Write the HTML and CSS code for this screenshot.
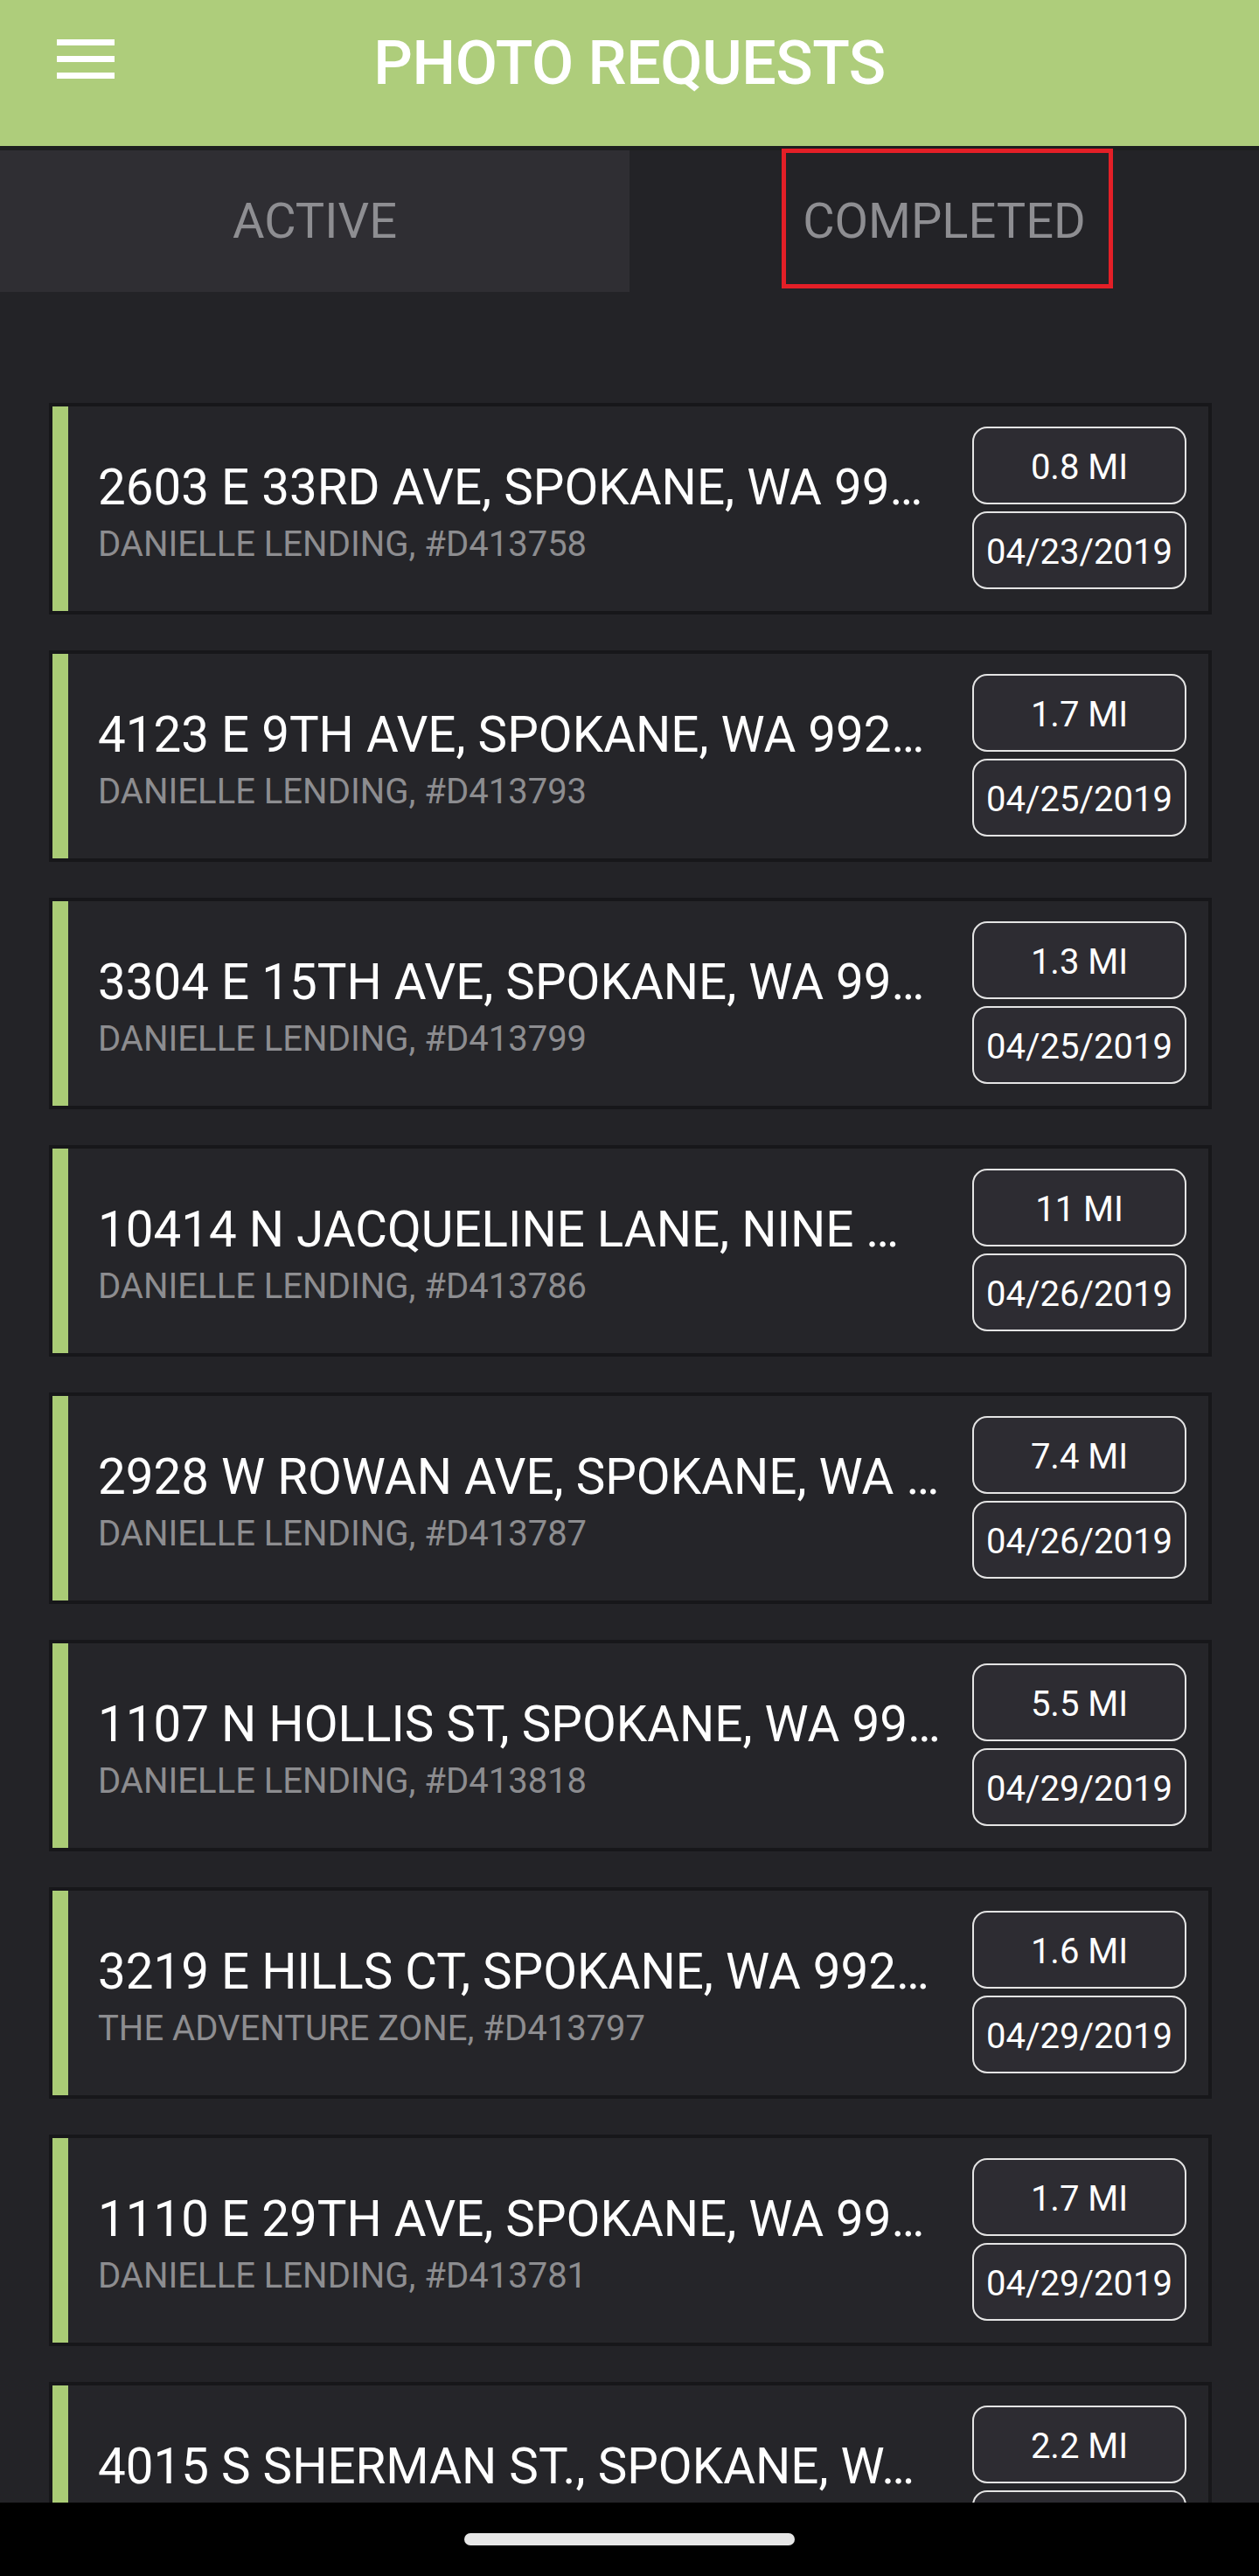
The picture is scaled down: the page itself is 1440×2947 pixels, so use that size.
FILE: index.html
```html
<!DOCTYPE html>
<html lang="en">
<head>
<meta charset="utf-8">
<title>Photo Requests</title>
<link rel="stylesheet" href="styles.css">
</head>
<body>
<header class="toolbar">
  <div class="toolbar-left">
    <span class="menu" aria-label="Menu"><i></i><i></i><i></i></span>
  </div>
  <h1 class="title">PHOTO REQUESTS</h1>
  <div class="toolbar-right"></div>
</header>
<nav class="tabs">
  <div class="tab tab-active">ACTIVE</div>
  <div class="tab">COMPLETED<span class="highlight"></span></div>
</nav>
<main class="list">
  <article class="card"><div class="accent"></div><div class="info"><div class="address">2603 E 33RD AVE, SPOKANE, WA 99…</div><div class="client">DANIELLE LENDING, #D413758</div></div><div class="badges"><div class="badge">0.8 MI</div><div class="badge">04/23/2019</div></div></article>
  <article class="card"><div class="accent"></div><div class="info"><div class="address">4123 E 9TH AVE, SPOKANE, WA 992…</div><div class="client">DANIELLE LENDING, #D413793</div></div><div class="badges"><div class="badge">1.7 MI</div><div class="badge">04/25/2019</div></div></article>
  <article class="card"><div class="accent"></div><div class="info"><div class="address">3304 E 15TH AVE, SPOKANE, WA 99…</div><div class="client">DANIELLE LENDING, #D413799</div></div><div class="badges"><div class="badge">1.3 MI</div><div class="badge">04/25/2019</div></div></article>
  <article class="card"><div class="accent"></div><div class="info"><div class="address">10414 N JACQUELINE LANE, NINE …</div><div class="client">DANIELLE LENDING, #D413786</div></div><div class="badges"><div class="badge">11 MI</div><div class="badge">04/26/2019</div></div></article>
  <article class="card"><div class="accent"></div><div class="info"><div class="address">2928 W ROWAN AVE, SPOKANE, WA …</div><div class="client">DANIELLE LENDING, #D413787</div></div><div class="badges"><div class="badge">7.4 MI</div><div class="badge">04/26/2019</div></div></article>
  <article class="card"><div class="accent"></div><div class="info"><div class="address">1107 N HOLLIS ST, SPOKANE, WA 99…</div><div class="client">DANIELLE LENDING, #D413818</div></div><div class="badges"><div class="badge">5.5 MI</div><div class="badge">04/29/2019</div></div></article>
  <article class="card"><div class="accent"></div><div class="info"><div class="address">3219 E HILLS CT, SPOKANE, WA 992…</div><div class="client">THE ADVENTURE ZONE, #D413797</div></div><div class="badges"><div class="badge">1.6 MI</div><div class="badge">04/29/2019</div></div></article>
  <article class="card"><div class="accent"></div><div class="info"><div class="address">1110 E 29TH AVE, SPOKANE, WA 99…</div><div class="client">DANIELLE LENDING, #D413781</div></div><div class="badges"><div class="badge">1.7 MI</div><div class="badge">04/29/2019</div></div></article>
  <article class="card"><div class="accent"></div><div class="info"><div class="address">4015 S SHERMAN ST., SPOKANE, W…</div><div class="client">DANIELLE LENDING, #D413800</div></div><div class="badges"><div class="badge">2.2 MI</div><div class="badge">04/30/2019</div></div></article>
</main>
<div class="navbar"><span class="handle"></span></div>
</body>
</html>
```
FILE: styles.css
```css
html, body {
  margin: 0;
  padding: 0;
}
body {
  background: #232327;
  font-family: Roboto, "Noto Sans", "Liberation Sans", sans-serif;
  height: 2947px;
  overflow: hidden;
}

.toolbar {
  height: 167px;
  background: #aecd7b;
  display: grid;
  grid-template-columns: 1fr auto 1fr;
  align-items: start;
  box-sizing: border-box;
  padding-top: 37px;
}
.toolbar-left {
  padding-left: 65px;
  padding-top: 8px;
}
.menu {
  display: flex;
  flex-direction: column;
  gap: 12px;
  width: 66px;
}
.menu i {
  display: block;
  height: 7px;
  background: #ffffff;
}
.title {
  margin: 0;
  font-size: 70px;
  line-height: 70px;
  font-weight: 500;
  color: #ffffff;
  letter-spacing: -0.5px;
}

.tabs {
  display: flex;
  border-top: 5px solid #1d1f1f;
}
.tab {
  flex: 1;
  position: relative;
  height: 162px;
  line-height: 162px;
  text-align: center;
  font-size: 56px;
  color: #8e8e92;
}
.tab-active {
  background: #2f2e33;
}
.highlight {
  position: absolute;
  left: 174px;
  top: -2px;
  width: 379px;
  height: 160px;
  box-sizing: border-box;
  border: 5px solid #e31f27;
}

.list {
  padding: 127px 54px 0 56px;
  display: flex;
  flex-direction: column;
  gap: 41px;
}
.card {
  display: flex;
  border: 4px solid #17171a;
  background: #252529;
}
.accent {
  width: 18px;
  flex: none;
  background: #aacc76;
}
.info {
  flex: 1;
  min-width: 0;
  align-self: center;
  padding: 16px 10px 0 34px;
}
.address {
  font-size: 56.5px;
  line-height: 62px;
  color: #ffffff;
  white-space: nowrap;
}
.client {
  font-size: 40px;
  line-height: 60px;
  padding-top: 4px;
  color: #8d8d90;
  white-space: nowrap;
}
.badges {
  flex: none;
  display: flex;
  flex-direction: column;
  gap: 8px;
  padding: 23px 25px 25px 0;
}
.badge {
  width: 245px;
  height: 89px;
  box-sizing: border-box;
  border: 2px solid #e4e4e4;
  border-radius: 17px;
  background: #2d2c32;
  color: #ffffff;
  font-size: 40px;
  line-height: 40px;
  display: flex;
  align-items: center;
  justify-content: center;
  padding-top: 5px;
}

.navbar {
  position: fixed;
  left: 0;
  right: 0;
  bottom: 0;
  height: 84px;
  background: #000000;
  display: flex;
  justify-content: center;
  align-items: flex-start;
}
.handle {
  margin-top: 35px;
  width: 378px;
  height: 14px;
  border-radius: 7px;
  background: #e6e6e6;
}
```
